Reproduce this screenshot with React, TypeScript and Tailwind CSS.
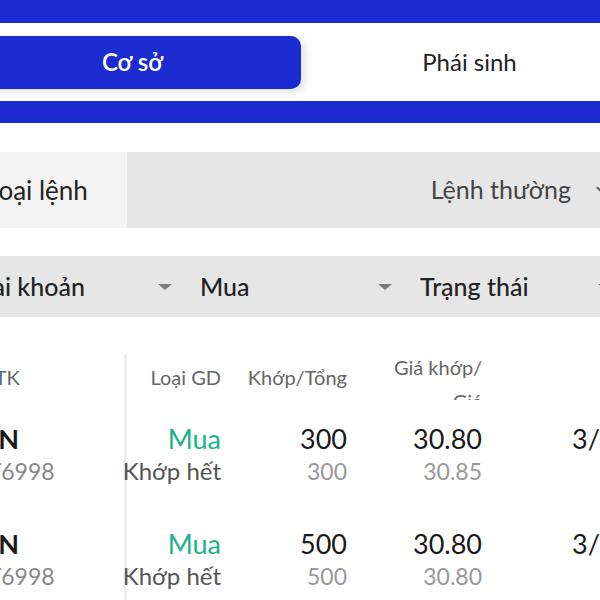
import React from "react";
import { ChevronDown } from "lucide-react";

const Tri = () => (
  <svg width="14" height="6" viewBox="0 0 14 6" className="shrink-0">
    <path d="M0 0 H14 L7 6 Z" fill="#7a7a7a" />
  </svg>
);

type Row = {
  code: string;
  acc: string;
  side: string;
  status: string;
  qty: string;
  total: string;
  price: string;
  order: string;
  date: string;
};

const rows: Row[] = [
  { code: "PVN", acc: "07T6998", side: "Mua", status: "Khớp hết", qty: "300", total: "300", price: "30.80", order: "30.85", date: "3/9/2024" },
  { code: "PVN", acc: "07T6998", side: "Mua", status: "Khớp hết", qty: "500", total: "500", price: "30.80", order: "30.80", date: "3/9/2024" },
];

export default function App() {
  return (
    <div className="w-[600px] h-[600px] overflow-hidden bg-white font-[family-name:Lato,'Noto_Sans',sans-serif] text-[#1a1a1a]">
      {/* top blue bar */}
      <div className="h-[23px] bg-[#1b2bd0]" />
      {/* tabs */}
      <div className="h-[78px] flex items-center">
        <div className="ml-[-36px] flex w-[674px] h-[53px] shrink-0">
          <div className="w-[337px] shrink-0 rounded-[10px] bg-[#1b2bd0] shadow-[4px_3px_10px_rgba(0,0,0,0.12)] flex items-center justify-center text-white text-[24px] font-semibold">
            Cơ sở
          </div>
          <div className="w-[337px] shrink-0 flex items-center justify-center text-[24px] text-[#222]">
            Phái sinh
          </div>
        </div>
      </div>
      <div className="h-[22px] bg-[#1b2bd0]" />
      <div className="h-[29px]" />
      {/* order type */}
      <div className="h-[76px] flex ml-[-30px] w-[660px]">
        <div className="w-[157px] shrink-0 bg-[#f3f3f3] flex items-center pl-[16px] text-[26px] text-[#222] whitespace-nowrap">
          Loại lệnh
        </div>
        <div className="flex-1 bg-[#e6e6e6] flex items-center justify-end gap-[22px] pr-[19px] text-[25px] text-[#444] whitespace-nowrap">
          <span>Lệnh thường</span>
          <ChevronDown size={18} color="#555" strokeWidth={2.5} />
        </div>
      </div>
      <div className="h-[28px]" />
      {/* filters */}
      <div className="h-[61px] flex ml-[-30px] w-[660px] bg-[#e6e6e6]">
        {["Tài khoản", "Mua", "Trạng thái"].map((t) => (
          <div key={t} className="w-[220px] shrink-0 flex items-center justify-between pl-[10px] pr-[18px] text-[25px] font-medium text-[#222] whitespace-nowrap">
            <span>{t}</span>
            <Tri />
          </div>
        ))}
      </div>
      <div className="h-[37px]" />
      {/* table */}
      <div className="flex ml-[-32px] w-[800px] whitespace-nowrap">
        {/* account column */}
        <div className="w-[156px] shrink-0 flex flex-col">
          <div className="h-[46px] flex items-center text-[20px] text-[#666]">Số TK</div>
          {rows.map((r, i) => (
            <div key={i} className="h-[105px] pt-[23px] flex flex-col">
              <div className="-ml-[5px] text-[27px] leading-[32px] font-bold">{r.code}</div>
              <div className="-ml-[7px] text-[23px] leading-[32px] text-[#888]">{r.acc}</div>
            </div>
          ))}
        </div>
        <div className="w-[3px] shrink-0 bg-[#efefef] h-[300px]" />
        {/* Loai GD */}
        <div className="w-[94px] shrink-0 flex flex-col items-end">
          <div className="h-[46px] flex items-center text-[20px] text-[#666]">Loại GD</div>
          {rows.map((r, i) => (
            <div key={i} className="h-[105px] pt-[23px] flex flex-col items-end">
              <div className="text-[27px] leading-[32px] text-[#1cb287]">{r.side}</div>
              <div className="text-[24px] leading-[32px] text-[#555]">{r.status}</div>
            </div>
          ))}
        </div>
        {/* Khop/Tong */}
        <div className="w-[126px] shrink-0 flex flex-col items-end">
          <div className="h-[46px] flex items-center text-[20px] text-[#666]">Khớp/Tổng</div>
          {rows.map((r, i) => (
            <div key={i} className="h-[105px] pt-[23px] flex flex-col items-end">
              <div className="text-[27px] leading-[32px]">{r.qty}</div>
              <div className="text-[23px] leading-[32px] text-[#999]">{r.total}</div>
            </div>
          ))}
        </div>
        {/* Gia */}
        <div className="w-[135px] shrink-0 flex flex-col items-end">
          <div className="h-[46px] overflow-hidden">
            <div className="-mt-[4px] text-right text-[20px] leading-[34px] text-[#666]">
              Giá khớp/
              <br />
              Giá
            </div>
          </div>
          {rows.map((r, i) => (
            <div key={i} className="h-[105px] pt-[23px] flex flex-col items-end">
              <div className="text-[27px] leading-[32px]">{r.price}</div>
              <div className="text-[23px] leading-[32px] text-[#999]">{r.order}</div>
            </div>
          ))}
        </div>
        {/* date */}
        <div className="pl-[90px] shrink-0 flex flex-col">
          <div className="h-[46px]" />
          {rows.map((r, i) => (
            <div key={i} className="h-[105px] pt-[23px] flex flex-col">
              <div className="text-[27px] leading-[32px]">{r.date}</div>
            </div>
          ))}
        </div>
      </div>
    </div>
  );
}
